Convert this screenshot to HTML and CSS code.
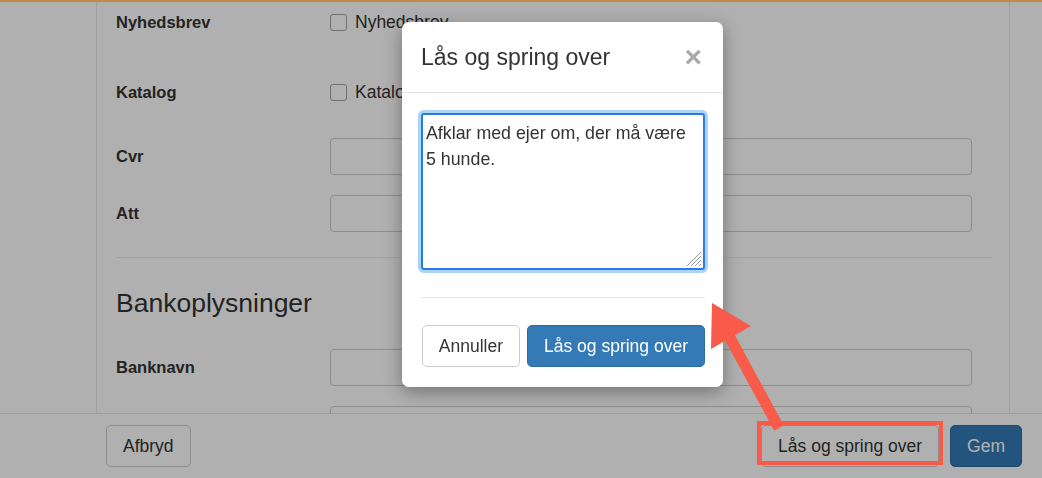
FILE: index.html
```html
<!DOCTYPE html>
<html lang="da">
<head>
    <meta charset="UTF-8">
    <title>Rediger kunde</title>
    <link rel="stylesheet" href="styles.css">
</head>
<body>
    <div class="topline"></div>
    <div class="app">
        <div class="main">
            <div class="gutter"></div>
            <div class="panel">
                <div class="form-row row-check">
                    <label class="form-label">Nyhedsbrev</label>
                    <label class="check"><input type="checkbox"> Nyhedsbrev</label>
                </div>
                <div class="form-row row-check">
                    <label class="form-label">Katalog</label>
                    <label class="check"><input type="checkbox"> Katalog</label>
                </div>
                <div class="form-row">
                    <label class="form-label">Cvr</label>
                    <input class="form-control" type="text">
                </div>
                <div class="form-row">
                    <label class="form-label">Att</label>
                    <input class="form-control" type="text">
                </div>
                <hr class="divider">
                <h3 class="section-title">Bankoplysninger</h3>
                <div class="form-row">
                    <label class="form-label">Banknavn</label>
                    <input class="form-control" type="text">
                </div>
                <div class="form-row">
                    <label class="form-label"></label>
                    <input class="form-control" type="text">
                </div>
            </div>
        </div>
        <div class="footer">
            <button class="btn btn-cancel">Afbryd</button>
            <button class="btn">Lås og spring over</button>
            <button class="btn btn-primary">Gem</button>
        </div>
    </div>

    <div class="backdrop"></div>

    <div class="modal">
        <div class="modal-header">
            <h4 class="modal-title">Lås og spring over</h4>
            <span class="close">&times;</span>
        </div>
        <div class="modal-body">
            <div class="note-wrap">
                <textarea class="note">Afklar med ejer om, der må være 5 hunde.</textarea>
                <svg class="grip" width="15" height="15" viewBox="0 0 15 15">
                    <path d="M1 15L15 1M5 15L15 5M9 15L15 9M13 15L15 13" stroke="#999" stroke-width="1" fill="none"/>
                </svg>
            </div>
        </div>
        <div class="modal-footer">
            <button class="btn">Annuller</button>
            <button class="btn btn-primary">Lås og spring over</button>
        </div>
    </div>

    <!-- annotation: arrow + box round the footer button -->
    <svg class="annotation" width="1042" height="478" viewBox="0 0 1042 478">
        <line x1="729" y1="336" x2="779" y2="428" stroke="#f95b4b" stroke-width="11"/>
        <polygon points="712,303 751,326 711,349" fill="#f95b4b"/>
        <rect x="759" y="423" width="182" height="40" fill="none" stroke="#f95b4b" stroke-width="4"/>
    </svg>
</body>
</html>
```

FILE: styles.css
```css
body {
    margin: 0;
    font-family: "Liberation Sans", Arial, sans-serif;
    font-size: 17.5px;
    color: #333;
    background: #fff;
    overflow: hidden;
}

.topline {
    position: fixed;
    top: 0;
    left: 0;
    right: 0;
    height: 2px;
    background: #c38a45;
    z-index: 30;
}

.app {
    display: flex;
    flex-direction: column;
    height: 478px;
}
.main {
    display: flex;
    height: 413px;
    overflow: hidden;
}
.gutter {
    width: 96px;
}
.panel {
    width: 876px;
    padding: 0 17px 0 19px;
    border-left: 1px solid #e9e9e9;
    border-right: 1px solid #e9e9e9;
}

.form-row {
    display: flex;
    align-items: center;
    height: 37px;
    margin-bottom: 20px;
}
.row-check {
    margin-bottom: 27px;
}
.row-check:first-child {
    margin-top: 4px;
    margin-bottom: 33px;
}
.form-label {
    width: 214px;
    font-weight: bold;
    font-size: 16.5px;
}
.form-control {
    flex: 1;
    height: 37px;
    margin: 0 20px 0 0;
    border: 1px solid #ccc;
    border-radius: 4px;
    box-sizing: border-box;
}
.check {
    display: flex;
    align-items: center;
    gap: 8px;
}
.check input {
    appearance: none;
    width: 17px;
    height: 17px;
    margin: 0;
    border: 1px solid #a3a3a3;
    border-radius: 3px;
    background: #fff;
}

.divider {
    border: 0;
    border-top: 1px solid #eee;
    margin: 25px 0 0 0;
}
.section-title {
    font-size: 26.5px;
    font-weight: normal;
    line-height: 29px;
    margin: 31px 0 31px 0;
}

.footer {
    display: flex;
    align-items: center;
    height: 64px;
    border-top: 1px solid #e5e5e5;
    padding: 0 20px 0 106px;
    gap: 11px;
}
.btn-cancel {
    margin-right: auto;
}

.btn {
    height: 42px;
    padding: 0 16px;
    font-family: inherit;
    font-size: 17.5px;
    color: #333;
    background: #fff;
    border: 1px solid #ccc;
    border-radius: 5px;
}
.btn-primary {
    color: #fff;
    background: #337ab7;
    border-color: #2e6da4;
}

.backdrop {
    position: fixed;
    top: 0;
    left: 0;
    right: 0;
    bottom: 0;
    background: rgba(0, 0, 0, 0.31);
    z-index: 10;
}

.modal {
    position: absolute;
    top: 22px;
    left: 402px;
    width: 321px;
    height: 365px;
    background: #fff;
    border-radius: 7px;
    box-shadow: 0 5px 18px rgba(0, 0, 0, 0.35);
    z-index: 20;
}
.modal-header {
    display: flex;
    align-items: center;
    justify-content: space-between;
    height: 71px;
    padding: 0 19px;
    border-bottom: 1px solid #e5e5e5;
    box-sizing: border-box;
}
.modal-title {
    margin: 0;
    font-size: 23px;
    font-weight: normal;
    color: #333;
}
.close {
    font-size: 30px;
    font-weight: bold;
    color: #a9a9a9;
    line-height: 1;
    margin-right: 2px;
}
.modal-body {
    padding: 20px 18px 0 19px;
}
.note-wrap {
    position: relative;
}
.note {
    display: block;
    width: 284px;
    height: 157px;
    box-sizing: border-box;
    padding: 5px 3px;
    font-family: inherit;
    font-size: 17.8px;
    line-height: 26px;
    color: #333;
    border: 2px solid #2a7ce0;
    border-radius: 3px;
    box-shadow: 0 0 0 3px #acd3f8;
    outline: none;
    resize: none;
}
.grip {
    position: absolute;
    right: 4px;
    bottom: 4px;
}
.modal-footer {
    display: flex;
    justify-content: flex-end;
    gap: 7px;
    margin: 27px 18px 0 19px;
    padding-top: 27px;
    border-top: 1px solid #e5e5e5;
}

.annotation {
    position: fixed;
    top: 0;
    left: 0;
    z-index: 40;
    pointer-events: none;
}
```
